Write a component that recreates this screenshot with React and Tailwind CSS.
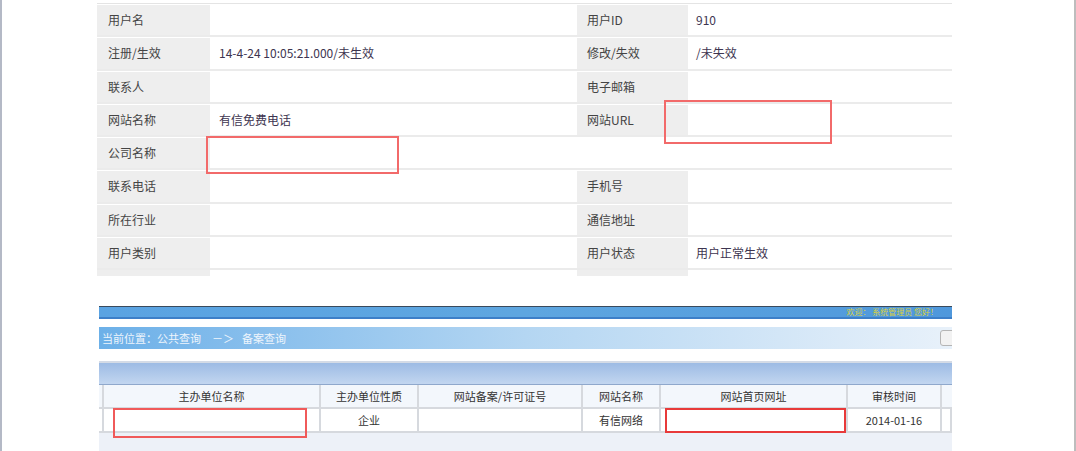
import React from "react";

const font = { fontFamily: '"Noto Sans CJK SC", "Noto Sans", sans-serif' };

const rows = [
  ["用户名", "", "用户ID", "910"],
  ["注册/生效", "14-4-24 10:05:21.000/未生效", "修改/失效", "/未失效"],
  ["联系人", "", "电子邮箱", ""],
  ["网站名称", "有信免费电话", "网站URL", ""],
  ["公司名称", "", null, null],
  ["联系电话", "", "手机号", ""],
  ["所在行业", "", "通信地址", ""],
  ["用户类别", "", "用户状态", "用户正常生效"],
];

const cols = [
  { w: "w-[5px]", t: "" },
  { w: "w-[217px]", t: "主办单位名称", v: "" },
  { w: "w-[98px]", t: "主办单位性质", v: "企业" },
  { w: "w-[164px]", t: "网站备案/许可证号", v: "" },
  { w: "w-[78px]", t: "网站名称", v: "有信网络" },
  { w: "w-[187px]", t: "网站首页网址", v: "" },
  { w: "w-[94px]", t: "审核时间", v: "2014-01-16" },
  { w: "w-[10px]", t: "" },
];

function InfoTable() {
  return (
    <div className="relative mt-[3px] ml-[95px] w-[855px] border-t border-[#e4e4e4] text-[12px] text-[#444]">
      {rows.map((r, i) => (
        <div key={i} className="flex h-[33.25px] items-stretch border-b-2 border-[#ebebeb] pt-px">
          <div className="flex w-[113px] items-center bg-[#eeeeee] pl-[11px]">{r[0]}</div>
          {r[2] === null ? (
            <div className="flex-1 bg-white" />
          ) : (
            <>
              <div className="flex w-[367px] items-center pl-[9px] text-[#3d3550]">{r[1]}</div>
              <div className="flex w-[111px] items-center bg-[#eeeeee] pl-[10px]">{r[2]}</div>
              <div className="flex w-[264px] items-center pl-[8px] text-[#3d3550]">{r[3]}</div>
            </>
          )}
        </div>
      ))}
      <div className="flex h-[6px]">
        <div className="w-[113px] bg-[#eeeeee]" />
        <div className="w-[367px]" />
        <div className="w-[111px] bg-[#eeeeee]" />
      </div>
      {/* redaction boxes */}
      <div className="absolute left-[109px] top-[132px] h-[38px] w-[193px] border-2 border-[#f26a6a]" />
      <div className="absolute left-[567px] top-[96px] h-[44px] w-[168px] border-2 border-[#f26a6a]" />
    </div>
  );
}

function RecordPanel() {
  return (
    <div className="relative ml-[97px] mt-[30px] w-[853px] overflow-hidden text-[11px]">
      {/* banner */}
      <div className="flex h-[13px] items-start justify-end overflow-hidden border-t border-[#3a4a5c] border-b-2 border-b-[#3d7fc8] bg-gradient-to-r from-[#5aa3e2] via-[#5ea6e0] to-[#4f98dc]">
        <div className="mr-[14px] text-[8px] leading-[9px] text-[#d8d040]">欢迎：  系统管理员  您好！</div>
      </div>
      <div className="h-[8px] bg-white" />
      {/* breadcrumb */}
      <div className="flex h-[22px] items-center justify-between bg-gradient-to-r from-[#6cb0e8] via-[#b4d6f2] to-[#e8f1fa]">
        <div className="pl-[3px] text-[11px] text-[#eef5fc]">
          当前位置：公共查询<span className="ml-[11px] mr-[8px]">－＞</span>备案查询
        </div>
        <div className="-mr-[6px] h-[16px] w-[18px] rounded-[3px] border border-[#b5b5b5] bg-[#f2f2f2]" />
      </div>
      <div className="h-[12px] bg-white" />
      {/* table title bar */}
      <div className="h-[24px] border-t-2 border-[#d4dbe6] border-b border-b-[#8fa8cc] bg-gradient-to-b from-[#9dbbe4] to-[#c2d6f0]" />
      {/* header row */}
      <div className="flex h-[24px] border-b-2 border-[#d6d9de] bg-[#f3f7fc] text-[#333]">
        {cols.map((c, i) => (
          <div
            key={i}
            className={`${c.w} flex items-center justify-center border-r-2 border-[#d6d9de] last:border-r-0`}
          >
            {c.t}
          </div>
        ))}
      </div>
      {/* data row */}
      <div className="relative flex h-[24px] border-b-2 border-[#d6d9de] bg-white text-[#333]">
        {cols.map((c, i) => (
          <div
            key={i}
            className={`${c.w} flex items-center justify-center border-r-2 border-[#d6d9de] last:border-r-0`}
          >
            {c.v}
          </div>
        ))}
        <div className="absolute left-[14px] -top-[1px] h-[30px] w-[194px] border-2 border-[#f05a5a]" />
        <div className="absolute left-[566px] -top-[1px] h-[25px] w-[181px] border-2 border-[#e83a3a]" />
      </div>
      <div className="h-[20px] bg-[#edf1f8]" />
    </div>
  );
}

export default function App() {
  return (
    <div style={font} className="flex h-[451px] w-[1076px] overflow-hidden bg-white">
      <div className="w-[2px] shrink-0 bg-[#b4b9c6]" />
      <div className="flex-1">
        <InfoTable />
        <RecordPanel />
      </div>
      <div className="w-[2px] shrink-0 bg-[#bdbdbd]" />
    </div>
  );
}
